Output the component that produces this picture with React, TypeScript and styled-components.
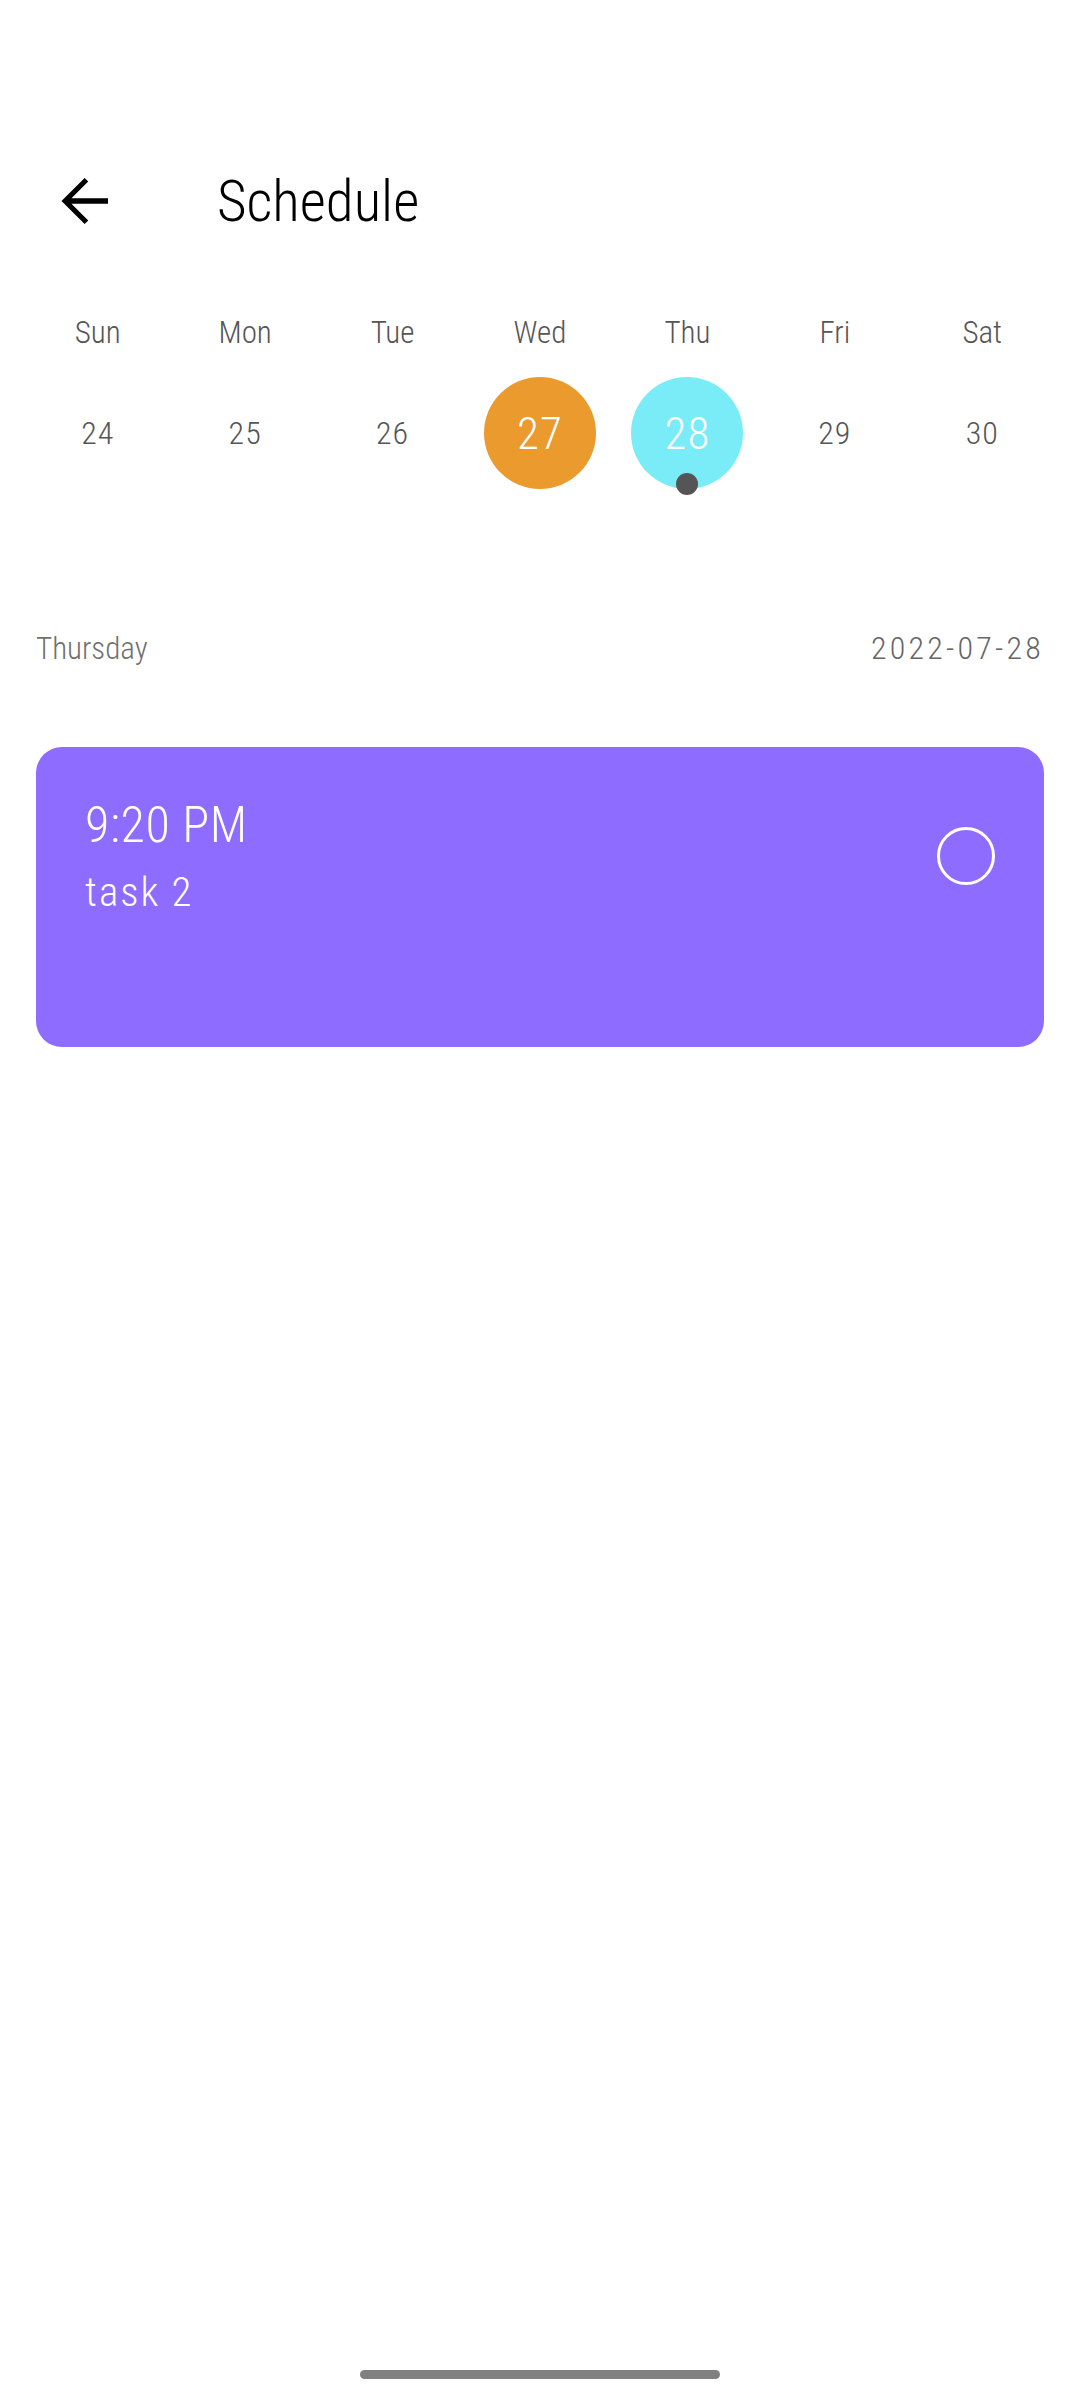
import styled, { createGlobalStyle } from 'styled-components';

const GlobalStyle = createGlobalStyle`
    body {
        margin: 0;
        background: #ffffff;
        font-family: Roboto, "Liberation Sans", sans-serif;
        font-stretch: condensed;
        font-weight: 300;
    }
`

const Screen = styled.div`
    min-height: 2400px;
    display: flex;
    flex-direction: column;
    padding-top: 165px;
    box-sizing: border-box;
`

const Header = styled.div`
    display: flex;
    align-items: center;
    height: 72px;
    padding-left: 48px;
`

const BackButton = styled.button`
    width: 72px;
    height: 72px;
    padding: 0;
    border: none;
    background: none;
    display: flex;
`

const Title = styled.h1`
    margin: 0 0 0 97px;
    font-size: 57px;
    line-height: 1;
    font-weight: 300;
    color: #000;
`

const WeekGrid = styled.div`
    display: grid;
    grid-template-columns: repeat(7, 1fr);
    padding: 0 24px;
    margin-top: 80px;
    row-gap: 29px;
`

const DayName = styled.div`
    text-align: center;
    font-size: 31px;
    line-height: 31px;
    height: 31px;
    color: #555;
`

const DayCell = styled.div`
    position: relative;
    display: flex;
    justify-content: center;
    height: 112px;
`

const DayCircle = styled.div<{ $bg?: string }>`
    width: 112px;
    height: 112px;
    border-radius: 50%;
    background: ${p => p.$bg || 'transparent'};
    color: ${p => (p.$bg ? '#fff' : '#555')};
    font-size: ${p => (p.$bg ? '45px' : '32px')};
    letter-spacing: 1px;
    display: flex;
    align-items: center;
    justify-content: center;
`

const EventDot = styled.span`
    position: absolute;
    top: 96px;
    left: 50%;
    width: 22px;
    height: 22px;
    margin-left: -11px;
    border-radius: 50%;
    background: #555;
`

const DateRow = styled.div`
    display: flex;
    justify-content: space-between;
    padding: 0 36px;
    margin-top: 144px;
    font-size: 31px;
    line-height: 31px;
    color: #707070;
`

const DateText = styled.span`
    font-size: 32px;
    letter-spacing: 3.2px;
    color: #666;
`

const TaskCard = styled.div`
    margin: 83px 36px 0 36px;
    height: 300px;
    box-sizing: border-box;
    border-radius: 26px;
    background: #8e6cff;
    padding: 53px 49px 0 49px;
    display: flex;
    justify-content: space-between;
    align-items: flex-start;
    color: #fff;
`

const TaskInfo = styled.div`
    display: flex;
    flex-direction: column;
    gap: 22px;
`

const TaskTime = styled.div`
    font-size: 50px;
    line-height: 50px;
    letter-spacing: 0.6px;
`

const TaskName = styled.div`
    font-size: 41px;
    line-height: 41px;
    letter-spacing: 2px;
`

const CheckCircle = styled.div`
    width: 58px;
    height: 58px;
    margin-top: 27px;
    box-sizing: border-box;
    border: 3px solid #fff;
    border-radius: 50%;
`

const Spacer = styled.div`
    flex: 1;
`

const HomeBar = styled.div`
    align-self: center;
    width: 360px;
    height: 9px;
    border-radius: 5px;
    background: #808080;
    margin-bottom: 21px;
`

const days = [
    { name: 'Sun', num: 24 },
    { name: 'Mon', num: 25 },
    { name: 'Tue', num: 26 },
    { name: 'Wed', num: 27, bg: '#eb9a2d' },
    { name: 'Thu', num: 28, bg: '#7aecf8', dot: true },
    { name: 'Fri', num: 29 },
    { name: 'Sat', num: 30 },
];

export default function App() {
    return (
        <Screen>
            <GlobalStyle />
            <Header>
                <BackButton>
                    <svg width="72" height="72" viewBox="0 0 24 24">
                        <path d="M20 11.1H7.83l5.59-5.59L12.2 4.3 4.5 12l7.7 7.7 1.22-1.21L7.83 12.9H20v-1.8z" fill="#000" />
                    </svg>
                </BackButton>
                <Title>Schedule</Title>
            </Header>
            <WeekGrid>
                {days.map(d => <DayName key={d.name}>{d.name}</DayName>)}
                {days.map(d =>
                    <DayCell key={d.num}>
                        <DayCircle $bg={d.bg}>{d.num}</DayCircle>
                        {d.dot && <EventDot />}
                    </DayCell>
                )}
            </WeekGrid>
            <DateRow>
                <span>Thursday</span>
                <DateText>2022-07-28</DateText>
            </DateRow>
            <TaskCard>
                <TaskInfo>
                    <TaskTime>9:20 PM</TaskTime>
                    <TaskName>task 2</TaskName>
                </TaskInfo>
                <CheckCircle />
            </TaskCard>
            <Spacer />
            <HomeBar />
        </Screen>
    );
}
